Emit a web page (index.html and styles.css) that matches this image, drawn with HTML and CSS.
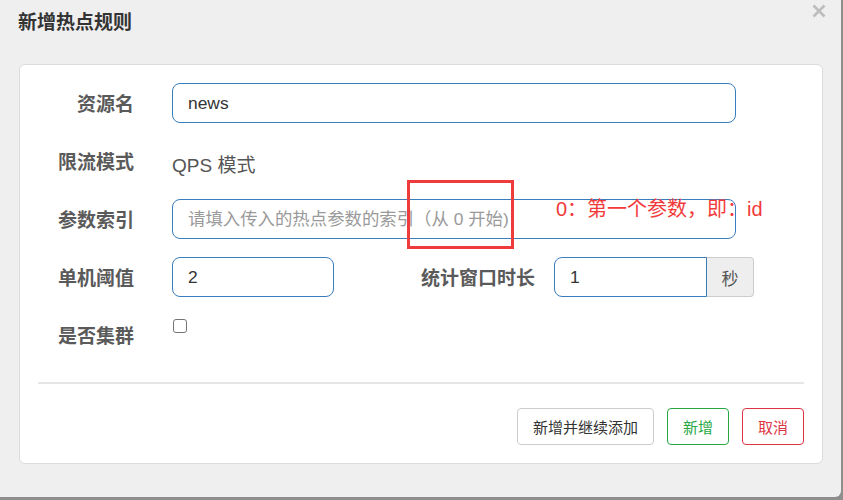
FILE: index.html
```html
<!DOCTYPE html>
<html lang="zh">
<head>
<meta charset="utf-8">
<title>新增热点规则</title>
<link rel="stylesheet" href="styles.css">
</head>
<body>
<div class="modal">
  <div class="modal-header">
    <h3 class="modal-title">新增热点规则</h3>
    <span class="close" aria-label="close">
      <svg width="14" height="14" viewBox="0 0 14 14"><path d="M1.5 1.5 L12.5 12.5 M12.5 1.5 L1.5 12.5" stroke="#bdbdbd" stroke-width="2.6" stroke-linecap="butt"/></svg>
    </span>
  </div>
  <div class="panel">
    <div class="form-row">
      <label class="label">资源名</label>
      <input class="input wide" type="text" value="news">
    </div>
    <div class="form-row">
      <label class="label">限流模式</label>
      <span class="static">QPS 模式</span>
    </div>
    <div class="form-row">
      <label class="label">参数索引</label>
      <input class="input wide" type="text" placeholder="请填入传入的热点参数的索引（从 0 开始)">
    </div>
    <div class="form-row">
      <label class="label">单机阈值</label>
      <input class="input short" type="text" value="2">
      <label class="label label-inline">统计窗口时长</label>
      <div class="input-group">
        <input class="input grouped" type="text" value="1">
        <span class="addon">秒</span>
      </div>
    </div>
    <div class="form-row">
      <label class="label">是否集群</label>
      <span class="checkbox"></span>
    </div>
    <div class="divider"></div>
    <div class="footer">
      <button class="btn btn-default">新增并继续添加</button>
      <button class="btn btn-success">新增</button>
      <button class="btn btn-danger">取消</button>
    </div>
  </div>
  <div class="note-box"></div>
  <div class="note-text">0：第一个参数，即：id</div>
</div>
</body>
</html>
```

FILE: styles.css
```css
html, body {
  margin: 0;
  padding: 0;
}
body {
  width: 843px;
  height: 500px;
  background: #8e8e8e;
  font-family: "Liberation Sans", "Noto Sans CJK SC", sans-serif;
  overflow: hidden;
}
.modal {
  position: relative;
  width: 841px;
  height: 497px;
  background: #efefef;
  border-radius: 0 0 6px 0;
}
.modal-header {
  height: 64px;
  display: flex;
  justify-content: space-between;
  align-items: flex-start;
  box-sizing: border-box;
  padding: 0 15px 0 18px;
}
.modal-title {
  margin: 0;
  padding-top: 10px;
  font-size: 19px;
  line-height: 26px;
  font-weight: bold;
  color: #333;
}
.close {
  display: block;
  width: 14px;
  height: 14px;
  margin-top: 4px;
}
.close svg {
  display: block;
}
.panel {
  margin: 0 18px 0 19px;
  background: #fff;
  border: 1px solid #dcdcdc;
  border-radius: 6px;
  padding: 18px;
}
.form-row {
  display: flex;
  align-items: center;
  height: 40px;
  margin-bottom: 18px;
}
.form-row:nth-child(5) {
  align-items: flex-start;
  margin-bottom: 0;
}
.label {
  width: 96px;
  flex: none;
  text-align: right;
  font-size: 19px;
  font-weight: bold;
  color: #5a5a5a;
  margin-right: 38px;
  line-height: 40px;
  position: relative;
  top: 2px;
}
.label-inline {
  width: auto;
  margin-left: 87px;
  margin-right: 19px;
}
.static {
  font-size: 19px;
  color: #555;
  position: relative;
  top: 2px;
}
.input {
  box-sizing: border-box;
  height: 40px;
  border: 1px solid #3a7dbd;
  border-radius: 8px;
  padding: 0 15px;
  font-family: "Liberation Sans", "Noto Sans CJK SC", sans-serif;
  font-size: 17.4px;
  color: #333;
  background: #fff;
  outline: none;
}
.input::placeholder {
  color: #9a9a9a;
}
.wide {
  width: 564px;
}
.short {
  width: 162px;
}
.input-group {
  display: flex;
  height: 40px;
}
.grouped {
  width: 153px;
  border-radius: 8px 0 0 8px;
}
.addon {
  box-sizing: border-box;
  width: 47px;
  height: 40px;
  background: #eee;
  border: 1px solid #ccc;
  border-left: none;
  border-radius: 0 4px 4px 0;
  display: flex;
  align-items: center;
  justify-content: center;
  font-size: 17px;
  color: #555;
}
.checkbox {
  box-sizing: border-box;
  width: 14px;
  height: 14px;
  border: 1px solid #767676;
  border-radius: 3px;
  margin-top: 4px;
  margin-left: 1px;
}
.divider {
  height: 2px;
  background: #e6e6e6;
  margin-top: 27px;
}
.footer {
  display: flex;
  justify-content: flex-end;
  gap: 13px;
  margin-top: 24px;
}
.btn {
  box-sizing: border-box;
  height: 37px;
  padding: 0 15px;
  background: #fff;
  border: 1px solid #ccc;
  border-radius: 4px;
  font-family: "Liberation Sans", "Noto Sans CJK SC", sans-serif;
  font-size: 15px;
  color: #333;
}
.btn-success {
  border-color: #28a745;
  color: #28a745;
}
.btn-danger {
  border-color: #dc3545;
  color: #dc3545;
}
.note-box {
  position: absolute;
  left: 407px;
  top: 180px;
  width: 107px;
  height: 69px;
  box-sizing: border-box;
  border: 3px solid #ee3b3b;
}
.note-text {
  position: absolute;
  left: 556px;
  top: 195px;
  font-size: 20px;
  line-height: 28px;
  color: #f23a3a;
  white-space: nowrap;
}
```
